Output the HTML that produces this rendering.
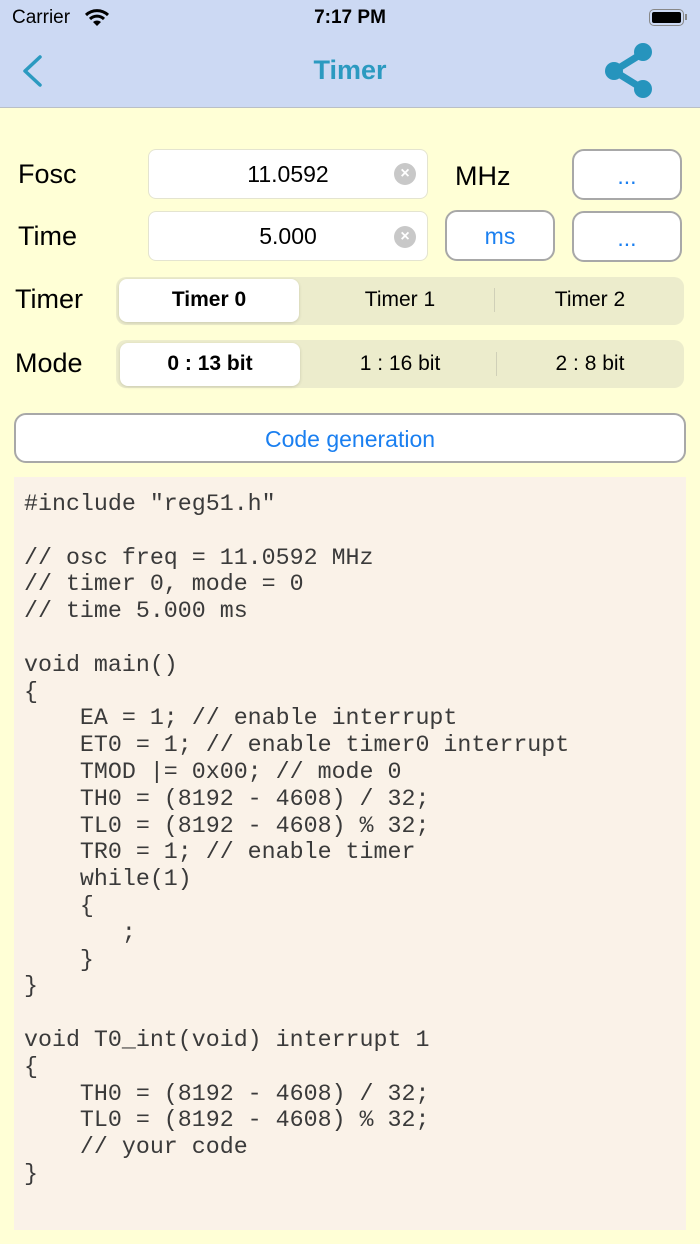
<!DOCTYPE html>
<html><head><meta charset="utf-8"><style>
*{margin:0;padding:0;box-sizing:border-box}
body{width:700px;height:1244px;background:#ffffd6;font-family:"Liberation Sans",sans-serif;position:relative;overflow:hidden}
.abs{position:absolute}
.nav{left:0;top:0;width:700px;height:108px;background:#ccd9f3;border-bottom:1px solid #b9bfc6}
.lbl{font-size:27px;color:#000}
.field{background:#fff;border:1px solid #e4e4d0;border-radius:8px;height:50px;font-size:23px;text-align:center;line-height:48px}
.clr{width:22px;height:22px;border-radius:50%;background:#c8c8c8;color:#fff;font-size:16px;line-height:22px;text-align:center;font-weight:bold}
.btn{background:#fff;border:2px solid #a8a8a8;border-radius:12px;color:#1a7ff0;text-align:center;font-size:23px}
.seg{background:#ececcc;border-radius:10px;height:48px}
.sel{background:#fff;border-radius:8px;box-shadow:0 1px 3px rgba(0,0,0,.15)}
.st{font-size:21px;text-align:center;line-height:48px;color:#000}
.b{font-weight:bold}
.code{left:14px;top:477px;width:672px;height:753px;background:#faf2e8;font-family:"Liberation Mono",monospace;font-size:23.3px;line-height:26.8px;padding:14px 0 0 10px;white-space:pre;color:#3a3a3a}
</style></head><body>
<div class="abs nav"></div>
<div class="abs" style="left:12px;top:7px;font-size:19px">Carrier</div>
<svg class="abs" style="left:84px;top:8px" width="26" height="20" viewBox="0 0 26 20"><path d="M2 7a16 16 0 0 1 22 0" stroke="#000" stroke-width="3" fill="none"/><path d="M6 11a10 10 0 0 1 14 0" stroke="#000" stroke-width="3" fill="none"/><path d="M13 18l-4-4a6 6 0 0 1 8 0z" fill="#000"/></svg>
<div class="abs" style="left:0;width:700px;top:7px;text-align:center;font-size:19px;font-weight:bold">7:17 PM</div>
<div class="abs" style="left:649px;top:9px;width:35px;height:17px;border:1.5px solid #888;border-radius:5px;padding:2px"><div style="background:#000;width:100%;height:100%;border-radius:2px"></div></div>
<div class="abs" style="left:685px;top:14px;width:2px;height:6px;background:#888"></div>
<svg class="abs" style="left:20px;top:54px" width="24" height="34"><path d="M20 3L5 17l15 14" stroke="#2b9ac0" stroke-width="3.5" fill="none" stroke-linecap="round" stroke-linejoin="round"/></svg>
<div class="abs" style="left:0;width:700px;top:55px;text-align:center;font-size:27px;color:#2b9ac0;font-weight:bold">Timer</div>
<svg class="abs" style="left:600px;top:40px" width="58" height="62"><path d="M43 13L14 31l29 18" stroke="#2694bd" stroke-width="7" fill="none"/><circle cx="43" cy="12" r="9" fill="#2694bd"/><circle cx="14" cy="31" r="9" fill="#2694bd"/><circle cx="43" cy="49" r="9" fill="#2694bd"/></svg>

<div class="abs lbl" style="left:18px;top:159px">Fosc</div>
<div class="abs field" style="left:148px;top:149px;width:280px">11.0592</div>
<div class="abs clr" style="left:394px;top:163px">×</div>
<div class="abs lbl" style="left:455px;top:161px">MHz</div>
<div class="abs btn" style="left:572px;top:149px;width:110px;height:51px;line-height:50px">...</div>

<div class="abs lbl" style="left:18px;top:221px">Time</div>
<div class="abs field" style="left:148px;top:211px;width:280px">5.000</div>
<div class="abs clr" style="left:394px;top:226px">×</div>
<div class="abs btn" style="left:445px;top:210px;width:110px;height:51px;line-height:48px">ms</div>
<div class="abs btn" style="left:572px;top:211px;width:110px;height:51px;line-height:50px">...</div>

<div class="abs lbl" style="left:15px;top:284px">Timer</div>
<div class="abs seg" style="left:116px;top:277px;width:568px"></div>
<div class="abs sel" style="left:119px;top:279px;width:180px;height:43px"></div>
<div class="abs st b" style="left:119px;top:276px;width:180px">Timer 0</div>
<div class="abs st" style="left:305px;top:276px;width:190px">Timer 1</div>
<div class="abs" style="left:494px;top:288px;width:1px;height:24px;background:#d0d0b8"></div>
<div class="abs st" style="left:495px;top:276px;width:190px">Timer 2</div>

<div class="abs lbl" style="left:15px;top:348px">Mode</div>
<div class="abs seg" style="left:116px;top:340px;width:568px"></div>
<div class="abs sel" style="left:120px;top:343px;width:180px;height:43px"></div>
<div class="abs st b" style="left:120px;top:340px;width:180px">0 : 13 bit</div>
<div class="abs st" style="left:305px;top:340px;width:190px">1 : 16 bit</div>
<div class="abs" style="left:496px;top:352px;width:1px;height:24px;background:#d0d0b8"></div>
<div class="abs st" style="left:495px;top:340px;width:190px">2 : 8 bit</div>

<div class="abs btn" style="left:14px;top:413px;width:672px;height:50px;line-height:48px">Code generation</div>

<div class="abs code">#include "reg51.h"

// osc freq = 11.0592 MHz
// timer 0, mode = 0
// time 5.000 ms

void main()
{
    EA = 1; // enable interrupt
    ET0 = 1; // enable timer0 interrupt
    TMOD |= 0x00; // mode 0
    TH0 = (8192 - 4608) / 32;
    TL0 = (8192 - 4608) % 32;
    TR0 = 1; // enable timer
    while(1)
    {
       ;
    }
}

void T0_int(void) interrupt 1
{
    TH0 = (8192 - 4608) / 32;
    TL0 = (8192 - 4608) % 32;
    // your code
}</div>
</body></html>
